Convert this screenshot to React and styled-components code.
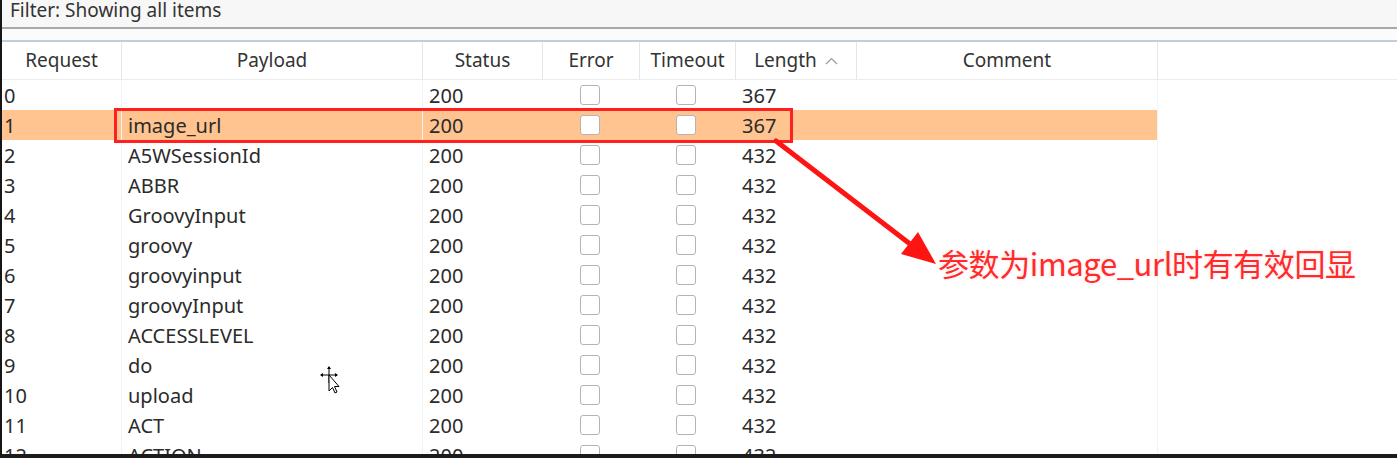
import React from 'react';
import styled, { createGlobalStyle } from 'styled-components';

const GlobalStyle = createGlobalStyle`
  html, body {
    margin: 0;
    padding: 0;
    background: #ffffff;
    overflow: hidden;
  }
  body {
    font-family: "Noto Sans", "Open Sans", sans-serif;
    color: #2e2e2e;
  }
`;

const COLS = '120px 301px 120px 97px 96px 121px 301px 1fr';

const Frame = styled.div`
  position: relative;
  width: 1397px;
  height: 458px;
  box-sizing: border-box;
  border-left: 2px solid #161616;
  border-bottom: 4px solid #1c1c1c;
  overflow: hidden;
  display: flex;
  flex-direction: column;
`;

const FilterBar = styled.div`
  height: 29px;
  flex: none;
  background: #f7f7f7;
  border-bottom: 2px solid #a9a9a9;
  display: flex;
  align-items: center;
  padding-left: 8px;
  padding-bottom: 8px;
  box-sizing: border-box;
  font-size: 19px;
  color: #333;
`;

const Gap = styled.div`
  height: 13px;
  flex: none;
  box-sizing: border-box;
  background: #fbfbfb;
  border-bottom: 2px solid #bccfe2;
`;

const Table = styled.div`
  display: grid;
  grid-template-columns: ${COLS};
  grid-template-rows: 38px;
  grid-auto-rows: 30px;
  font-size: 20px;
`;

const HeadCell = styled.div`
  display: flex;
  align-items: center;
  justify-content: center;
  border-right: ${p => (p.$last ? 'none' : '1px solid #e6e6e6')};
  border-bottom: 1px solid #ececec;
  color: #333;
  font-size: 19px;
  padding-bottom: 2px;
  box-sizing: border-box;
`;

const Cell = styled.div`
  display: flex;
  align-items: center;
  justify-content: ${p => (p.$center ? 'center' : 'flex-start')};
  padding-left: ${p => (p.$first ? '2px' : p.$center ? '0' : '6px')};
  padding-right: ${p => (p.$center ? '4px' : '0')};
  background: ${p => (p.$hl ? '#ffc48f' : 'transparent')};
  border-right: ${p => (p.$line ? '1px solid #f3f3f3' : 'none')};
  color: #2b2b2b;
  white-space: nowrap;
  box-sizing: border-box;
`;

const Check = styled.span`
  width: 20px;
  height: 20px;
  box-sizing: border-box;
  border: 1.5px solid #b4b4b4;
  border-radius: 3px;
  background: #fff;
`;

const Caret = styled.svg`
  margin-left: 8px;
  margin-top: 2px;
`;

const Highlight = styled.div`
  position: absolute;
  left: 112px;
  top: 108px;
  width: 679px;
  height: 35px;
  box-sizing: border-box;
  border: 3px solid #ff1f1f;
  pointer-events: none;
`;

const Overlay = styled.svg`
  position: absolute;
  left: 0;
  top: 0;
  pointer-events: none;
`;

const Note = styled.div`
  position: absolute;
  left: 936px;
  top: 240px;
  font-family: "Noto Sans CJK SC", "Noto Sans", sans-serif;
  font-size: 31px;
  letter-spacing: -0.4px;
  color: #ff2a2a;
  text-shadow: 0 0 2px #ffffff, 0 0 3px #ffd0d0;
  white-space: nowrap;
`;

const rows = [
  ['0', '', '367'],
  ['1', 'image_url', '367'],
  ['2', 'A5WSessionId', '432'],
  ['3', 'ABBR', '432'],
  ['4', 'GroovyInput', '432'],
  ['5', 'groovy', '432'],
  ['6', 'groovyinput', '432'],
  ['7', 'groovyInput', '432'],
  ['8', 'ACCESSLEVEL', '432'],
  ['9', 'do', '432'],
  ['10', 'upload', '432'],
  ['11', 'ACT', '432'],
  ['12', 'ACTION', '432'],
];

const headers = ['Request', 'Payload', 'Status', 'Error', 'Timeout', 'Length', 'Comment', ''];

export default function App() {
  return (
    <>
      <GlobalStyle />
      <Frame>
        <FilterBar>Filter: Showing all items</FilterBar>
        <Gap />
        <Table>
          {headers.map((h, i) => (
            <HeadCell key={i} $last={i === headers.length - 1}>
              {h}
              {h === 'Length' && (
                <Caret width="13" height="8" viewBox="0 0 13 8">
                  <path d="M1 7 L6.5 1.5 L12 7" fill="none" stroke="#9a9a9a" strokeWidth="1.2" />
                </Caret>
              )}
            </HeadCell>
          ))}
          {rows.map(([req, payload, len]) => {
            const hl = req === '1';
            return (
              <React.Fragment key={req}>
                <Cell $first $hl={hl} $line>{req}</Cell>
                <Cell $hl={hl} $line>{payload}</Cell>
                <Cell $hl={hl}>200</Cell>
                <Cell $center $hl={hl}><Check /></Cell>
                <Cell $center $hl={hl}><Check /></Cell>
                <Cell $hl={hl}>{len}</Cell>
                <Cell $hl={hl} $line />
                <Cell />
              </React.Fragment>
            );
          })}
        </Table>
        <Highlight />
        <Overlay width="1397" height="458" viewBox="0 0 1397 458">
          <line x1="774" y1="141" x2="912" y2="247" stroke="#ff1414" strokeWidth="5" strokeLinecap="round" />
          <polygon points="934,264 899,254 916,232" fill="#ff1414" />
          {/* move cursor */}
          <g transform="translate(318,366)">
            <path d="M9 1 L9 17 M1 9 L17 9" stroke="#000" strokeWidth="1" />
            <path d="M9 0 L7 3 L11 3 Z M0 9 L3 7 L3 11 Z M18 9 L15 7 L15 11 Z" fill="#000" />
            <path d="M9 9 L9 25 L12.5 21.5 L15 27 L17 26 L14.5 20.5 L19 20.5 Z" fill="#fff" stroke="#000" strokeWidth="1" />
          </g>
        </Overlay>
        <Note>参数为image_url时有有效回显</Note>
      </Frame>
    </>
  );
}
